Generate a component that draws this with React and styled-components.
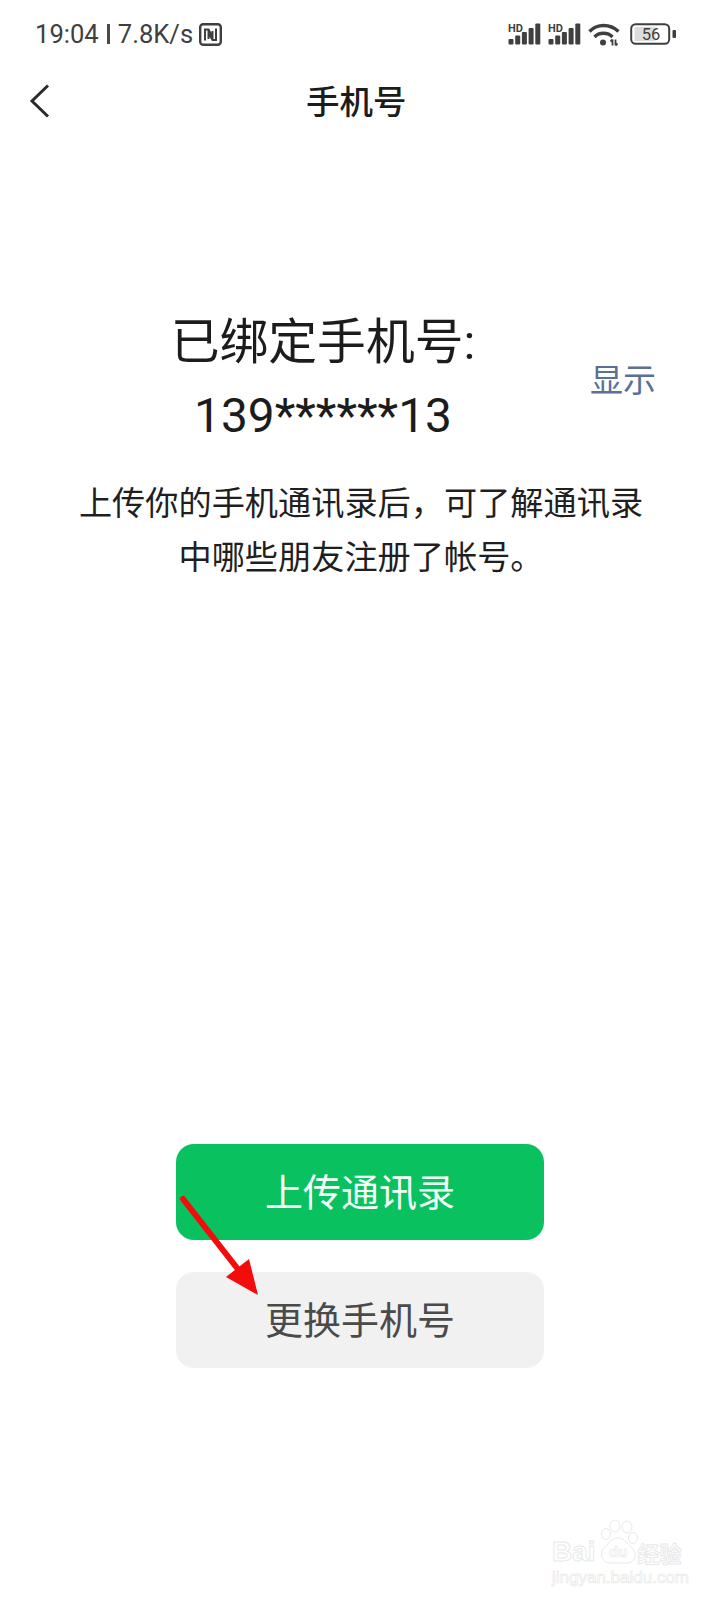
import React from 'react'
import styled, { createGlobalStyle } from 'styled-components'

const GlobalStyle = createGlobalStyle`
  html, body {
    margin: 0;
    padding: 0;
    background: #fff;
  }
`

const Page = styled.div`
  position: relative;
  width: 720px;
  height: 1600px;
  overflow: hidden;
  display: flex;
  flex-direction: column;
  background: #fff;
  font-family: Roboto, "Noto Sans CJK SC", sans-serif;
`

const StatusBar = styled.div`
  height: 68px;
  box-sizing: border-box;
  padding: 0 43px 0 35px;
  display: flex;
  align-items: center;
  justify-content: space-between;
  color: #3f3f3f;
`

const StatusLeft = styled.div`
  display: flex;
  align-items: center;
  gap: 6px;
  font-size: 25.6px;
`

const Divider = styled.span`
  width: 3px;
  height: 20px;
  margin: 0 2px;
  background: #4a4a4a;
`

const StatusRight = styled.div`
  display: flex;
  align-items: center;
  gap: 7px;
`

const WifiSvg = styled.svg`
  margin-right: 2px;
`

const BatterySvg = styled.svg`
  margin-left: 1px;
`

const NavBar = styled.div`
  height: 66px;
  box-sizing: border-box;
  padding: 0 0 0 28px;
  display: flex;
  align-items: center;
`

const NavTitle = styled.div`
  margin: 0 0 3px 254px;
  font-size: 33.5px;
  font-weight: 500;
  color: #1c1c1c;
`

const HeadingRow = styled.div`
  margin-top: 172px;
  padding-left: 167px;
  display: flex;
  align-items: center;
`

const Heading = styled.h1`
  width: 312px;
  margin: 0;
  font-size: 48.8px;
  font-weight: 400;
  line-height: 73px;
  text-align: center;
  color: #1c1c1c;
  white-space: nowrap;
`

const MaskedNumber = styled.span`
  font-size: 47.800px;
`

const ShowLink = styled.span`
  margin: 0 0 4px 111px;
  font-size: 33px;
  color: #5b6f97;
`

const Description = styled.p`
  width: 600px;
  margin: 24px 0 0 61px;
  font-size: 33.2px;
  line-height: 54px;
  text-align: center;
  color: #1f1f1f;
`

const Actions = styled.div`
  margin-top: 559px;
  display: flex;
  flex-direction: column;
  align-items: center;
  gap: 32px;
`

const Button = styled.div`
  width: 368px;
  height: 96px;
  box-sizing: border-box;
  padding-bottom: 6px;
  border-radius: 18px;
  display: flex;
  align-items: center;
  justify-content: center;
  font-size: 38px;
  background: ${(p) => (p.$primary ? '#0ac160' : '#f1f1f1')};
  color: ${(p) => (p.$primary ? '#f4fff8' : '#4a4a4a')};
`

const ArrowMark = styled.svg`
  position: absolute;
  left: 175px;
  top: 1190px;
`

const Watermark = styled.div`
  position: absolute;
  left: 552px;
  top: 1520px;
  width: 127px;
  color: transparent;
  -webkit-text-stroke: 1px #e9e9e9;
  font-family: "Liberation Sans", sans-serif;
`

const BrandLine = styled.div`
  display: flex;
  align-items: flex-end;
  height: 46px;
  font-size: 28px;
  font-weight: 700;
  line-height: 28px;
`

const BrandCjk = styled.span`
  margin-left: auto;
  font-size: 22px;
  line-height: 28px;
  white-space: nowrap;
  font-family: "Noto Sans CJK SC", sans-serif;
`

const PawMark = styled.svg`
  margin-left: 4px;
  flex: none;
`

const Domain = styled.div`
  margin-top: 3px;
  font-size: 17px;
  line-height: 18px;
  white-space: nowrap;
  -webkit-text-stroke: 0.7px #e9e9e9;
`

const NfcIcon = () => (
  <svg width="23" height="23" viewBox="0 0 23 23" fill="none" stroke="#3f3f3f">
    <rect x="1.200" y="1.200" width="20.600" height="20.600" rx="3" strokeWidth="2.400" />
    <path d="M6 17.500V6.500h3.500l4 7V8M17 5.500v11.500h-3.500l-4-7v6" strokeWidth="2" />
  </svg>
)

const SignalIcon = () => (
  <svg width="33" height="22" viewBox="0 0 33 22" fill="#3f3f3f">
    <text x="0" y="9" fontSize="11" fontWeight="700" fontFamily="Roboto, sans-serif">HD</text>
    <rect x="0.500" y="16" width="5" height="5.500" rx="1" />
    <rect x="7.200" y="12.500" width="5" height="9" rx="1" />
    <rect x="13.900" y="9" width="5" height="12.500" rx="1" />
    <rect x="20.600" y="5" width="5" height="16.500" rx="1" />
    <rect x="27.300" y="0.500" width="5" height="21" rx="1" />
  </svg>
)

const WifiIcon = () => (
  <WifiSvg width="32" height="24" viewBox="0 0 32 24" fill="none" stroke="#3f3f3f" strokeWidth="3.400">
    <path d="M1.500 9.500C9 1.500 22 1.500 30.500 9.500" />
    <path d="M6.500 15C11 10 20 10 24.500 15" />
    <circle cx="15" cy="20.500" r="3" fill="#3f3f3f" stroke="none" />
    <path d="M24.500 23.500v-6M22.500 19.500l2-2M27.500 17.500v6M29.500 21.500l-2 2" strokeWidth="1.800" />
  </WifiSvg>
)

const BatteryIcon = () => (
  <BatterySvg width="47" height="22" viewBox="0 0 47 22" fill="none">
    <rect x="1.200" y="1.200" width="38" height="19.600" rx="4.500" stroke="#3f3f3f" strokeWidth="2" />
    <rect x="4.500" y="4" width="21" height="14" rx="1" fill="#dcdcdc" />
    <rect x="42.500" y="7" width="3.500" height="8" rx="1" fill="#3f3f3f" />
    <text x="21" y="16.500" fontSize="16.500" textAnchor="middle" fill="#3f3f3f" fontFamily="Roboto, sans-serif">56</text>
  </BatterySvg>
)

const BackIcon = () => (
  <svg width="24" height="36" viewBox="0 0 24 36" fill="none" stroke="#2a2a2a" strokeWidth="3">
    <path d="M20 2.500L4 18l16 15.500" />
  </svg>
)

const App = () => (
  <Page>
    <GlobalStyle />
    <StatusBar>
      <StatusLeft>
        <span>19:04</span>
        <Divider />
        <span>7.8K/s</span>
        <NfcIcon />
      </StatusLeft>
      <StatusRight>
        <SignalIcon />
        <SignalIcon />
        <WifiIcon />
        <BatteryIcon />
      </StatusRight>
    </StatusBar>
    <NavBar>
      <BackIcon />
      <NavTitle>手机号</NavTitle>
    </NavBar>
    <HeadingRow>
      <Heading>
        已绑定手机号:
        <br />
        <MaskedNumber>139******13</MaskedNumber>
      </Heading>
      <ShowLink>显示</ShowLink>
    </HeadingRow>
    <Description>
      上传你的手机通讯录后，可了解通讯录
      <br />
      中哪些朋友注册了帐号。
    </Description>
    <Actions>
      <Button $primary>上传通讯录</Button>
      <Button>更换手机号</Button>
    </Actions>
    <ArrowMark width="90" height="110" viewBox="0 0 90 110">
      <path d="M8 9L62 78" stroke="#f20c0c" strokeWidth="6" strokeLinecap="round" />
      <path d="M83 105L51 87 74 69Z" fill="#f20c0c" />
    </ArrowMark>
    <Watermark>
      <BrandLine>
        Bai
        <PawMark width="38" height="46" viewBox="0 0 38 46" fill="none" stroke="#e9e9e9" strokeWidth="1">
          <ellipse cx="6" cy="14" rx="4.500" ry="5.500" />
          <ellipse cx="15" cy="6" rx="5" ry="6" />
          <ellipse cx="27" cy="7" rx="5" ry="6" />
          <ellipse cx="33" cy="18" rx="4.500" ry="5.500" />
          <path d="M18 18C11 18 9 24 4 28c-5 5-2 15 6 15h17c8 0 11-10 5-15-5-4-7-10-14-10z" />
          <text x="9" y="37" fontSize="15" fontFamily="Liberation Sans, sans-serif" strokeWidth="0.700">du</text>
        </PawMark>
        <BrandCjk>经验</BrandCjk>
      </BrandLine>
      <Domain>jingyan.baidu.com</Domain>
    </Watermark>
  </Page>
)

export default App
